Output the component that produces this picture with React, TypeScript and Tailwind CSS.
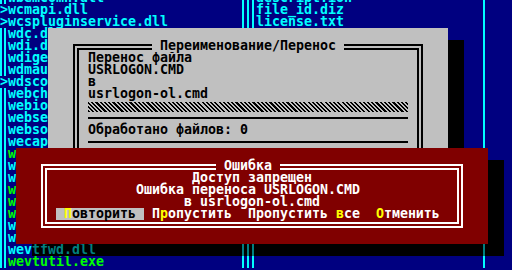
import React from "react";

type Row = { mark?: boolean; left: string; green?: boolean; right?: string };

const rows: Row[] = [
  { left: "wbemcomn.dll", right: "descript.ion" },
  { mark: true, left: "wcmapi.dll", right: "file_id.diz" },
  { mark: true, left: "wcspluginservice.dll", right: "license.txt" },
  { left: "wdc.dll" },
  { left: "wdi.dll" },
  { left: "wdigest.dll" },
  { left: "wdmaud.drv" },
  { mark: true, left: "wdscore.dll" },
  { left: "webcheck.dll" },
  { left: "webio.dll" },
  { left: "webservices.dll" },
  { left: "websocket.dll" },
  { left: "wecapi.dll" },
  { left: "wecutil.exe", green: true },
  { left: "wer.dll" },
  { left: "werdiagcontroller.dll" },
  { left: "werfault.exe", green: true },
  { left: "werfaultsecure.exe", green: true },
  { left: "wermgr.exe", green: true },
  { left: "werui.dll" },
  { left: "wevtapi.dll" },
  { left: "wevtfwd.dll" },
  { left: "wevtutil.exe", green: true },
];

function PanelRow({ row, dim }: { row: Row; dim?: boolean }) {
  const line = dim ? "bg-[#008080]" : "bg-[#00ffff]";
  const cyan = dim ? "text-[#008080]" : "text-[#00ffff]";
  const name = row.green ? (dim ? "text-[#008000]" : "text-[#00ff00]") : cyan;
  return (
    <div className="flex h-[12px] w-[512px] shrink-0">
      {row.mark ? (
        <div className={`w-[8px] h-full ${cyan}`}>&gt;</div>
      ) : (
        <div className="w-[8px] h-full flex gap-[2px]">
          <div className={`w-[2px] h-full ${line}`} />
          <div className={`w-[2px] h-full ${line}`} />
        </div>
      )}
      <div className={`w-[232px] h-full whitespace-pre ${name}`}>{row.left}</div>
      <div className="w-[16px] h-full flex pl-[2px] gap-[3px]">
        <div className={`w-[2px] h-full ${line}`} />
        <div className={`w-[2px] h-full ${line}`} />
        <div className={`w-[2px] h-full ${line}`} />
      </div>
      <div className={`w-[224px] h-full whitespace-pre ${cyan}`}>{row.right ?? ""}</div>
      <div className="w-[8px] h-full pl-[3px]">
        <div className={`w-[2px] h-full ${line}`} />
      </div>
      <div className="w-[24px] h-full" />
    </div>
  );
}

function Y({ children }: { children: React.ReactNode }) {
  return <span className="text-[#ffff00]">{children}</span>;
}

export default function App() {
  return (
    <div className="relative w-[512px] h-[270px] overflow-hidden bg-[#000080] font-['DejaVu_Sans_Mono',monospace] font-bold text-[13.29px] leading-[12px]">
      {/* panels */}
      <div className="flex flex-col -mt-[8px]">
        {rows.map((r, i) => (
          <PanelRow key={i} row={r} />
        ))}
      </div>

      {/* copy dialog shadow */}
      <div className="absolute left-[448px] top-[40px] w-[16px] h-[132px] bg-black" />

      {/* copy / rename dialog */}
      <div className="absolute left-[48px] top-[28px] w-[400px] h-[144px] bg-[#c0c0c0] px-[25px] pt-[16px] text-black">
        <div className="relative h-[200px] border-2 border-black p-[2px]">
          <div className="h-full border-2 border-black px-[9px] pt-[2px]">
            <div className="h-[12px] whitespace-pre">Перенос файла</div>
            <div className="h-[12px] whitespace-pre">USRLOGON.CMD</div>
            <div className="h-[12px] whitespace-pre">в</div>
            <div className="h-[12px] whitespace-pre">usrlogon-ol.cmd</div>
            <div className="h-[12px] pt-[2px]">
              <div className="h-[10px] w-full bg-[repeating-linear-gradient(45deg,#000_0_1.5px,#c0c0c0_1.5px_3px)]" />
            </div>
            <div className="h-[12px] pt-[5px]">
              <div className="h-[2px] w-full bg-black" />
            </div>
            <div className="h-[12px] whitespace-pre">Обработано файлов: 0</div>
            <div className="h-[12px] pt-[5px]">
              <div className="h-[2px] w-full bg-black" />
            </div>
          </div>
          <div className="absolute top-[-6px] left-[77px] h-[12px] bg-[#c0c0c0] whitespace-pre">
            {" Переименование/Перенос "}
          </div>
        </div>
      </div>

      {/* error dialog shadow */}
      <div className="absolute left-[488px] top-[160px] w-[16px] h-[84px] bg-black" />
      <div className="absolute left-[32px] top-[244px] w-[472px] h-[12px] bg-black overflow-hidden">
        <div className="-ml-[32px]">
          <PanelRow row={rows[21]} dim />
        </div>
      </div>

      {/* error dialog */}
      <div className="absolute left-[16px] top-[148px] w-[472px] h-[96px] bg-[#800000] px-[25px] py-[16px] text-white">
        <div className="relative h-full border-2 border-white p-[2px]">
          <div className="h-full border-2 border-white pl-[1px] pt-[2px]">
            <div className="h-[12px] pl-[144px] whitespace-pre">Доступ запрещен</div>
            <div className="h-[12px] pl-[88px] whitespace-pre">Ошибка переноса USRLOGON.CMD</div>
            <div className="h-[12px] pl-[136px] whitespace-pre">в usrlogon-ol.cmd</div>
            <div className="h-[12px] pl-[8px] flex whitespace-pre">
              <span className="bg-[#c0c0c0] text-black">
                {" "}
                <Y>П</Y>
                {"овторить "}
              </span>
              <span>
                {" П"}
                <Y>р</Y>
                {"опустить "}
              </span>
              <span>
                {" Пропустить "}
                <Y>в</Y>
                {"се "}
              </span>
              <span>
                {" "}
                <Y>О</Y>
                {"тменить "}
              </span>
            </div>
          </div>
          <div className="absolute top-[-6px] left-[173px] h-[12px] bg-[#800000] whitespace-pre">{" Ошибка "}</div>
        </div>
      </div>
    </div>
  );
}
